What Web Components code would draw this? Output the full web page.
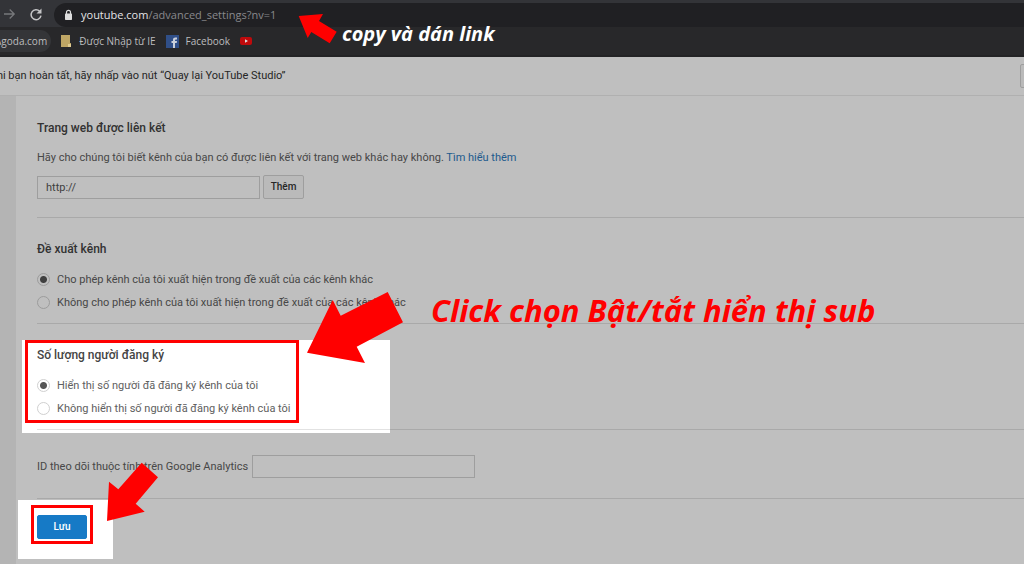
<!DOCTYPE html>
<html lang="vi">
<head>
<meta charset="utf-8">
<title>Cài đặt nâng cao</title>
<style>
html,body{height:100%}
body{margin:0;overflow:hidden;background:#fff}
</style>
</head>
<body>
<guide-page></guide-page>
<script>
const define = (name, html, setup) => customElements.define(name, class extends HTMLElement {
  constructor() {
    super();
    this.attachShadow({ mode: 'open' }).innerHTML = html;
  }
  connectedCallback() {
    if (setup) setup(this, this.shadowRoot);
  }
});

define('browser-bar', `
<style>
:host{display:block;background:#28282a;font:10px/16px "Open Sans","Noto Sans",sans-serif;color:#bdbdbf;overflow:hidden;border-bottom:2px solid #232325;height:55px}
.nav{display:flex;align-items:center;height:27px;background:#333438}
button{border:0;padding:0;background:none;width:16px;height:16px;flex:none;display:block}
.nav button+button{margin-left:10px}
.pill{flex:1;display:flex;align-items:center;height:24px;margin:2px 0 0 12px;border-radius:12px 0 0 12px;background:#202023;padding-left:9px;gap:7px}
.url{font-size:11px;color:#88898c;display:block}
.url b{font-weight:400;color:#e4e4e6}
.marks{display:flex;align-items:center;height:28px}
a{color:inherit;text-decoration:none;display:flex;align-items:center;gap:7px;white-space:nowrap}
.marks a+a+a{margin-left:10px}
.chip{background:#343538;border-radius:0 11px 11px 0;height:22px;padding-right:4px;margin:0 9px 0 -5px}
svg{display:block;flex:none}
</style>
<nav class="nav" aria-label="Điều hướng">
<button aria-label="Tiếp"><svg width="16" height="16" viewBox="0 0 16 16" fill="none" stroke="#77787b" stroke-width="1.3"><path d="M4 8H14M9.7 3.5 14.2 8 9.7 12.500"/></svg></button>
<button aria-label="Tải lại"><svg width="20" height="16" viewBox="0 0 20 16"><path d="M13.700 5.200A5 5 0 1 0 15 9.700" fill="none" stroke="#c5c5c7" stroke-width="1.500"/><path d="M15.500 2.500V7.500H10.500Z" fill="#c5c5c7"/></svg></button>
<div class="pill"><svg width="11" height="12" viewBox="0 0 11 12"><path d="M3.500 5V3.300a2 2 0 0 1 4 0V5" fill="none" stroke="#ddd" stroke-width="1.200"/><rect x="2" y="4.500" width="7" height="6.500" rx=".7" fill="#ddd"/></svg><span class="url"><b>youtube.com</b>/advanced_settings?nv=1</span></div>
</nav>
<nav class="marks" aria-label="Dấu trang">
<a class="chip" href="#">Agoda.com</a>
<a href="#"><svg width="12" height="12" viewBox="0 0 12 12"><path d="M1 0h9v8h1v4H1Z" fill="#bfa665"/><path d="M8 9h3v3H8Z" fill="#e0cb91"/></svg>Được Nhập từ IE</a>
<a href="#"><svg width="13" height="13" viewBox="0 0 13 13"><path d="M0 0h13v13H0Z" fill="#304f88"/><path d="M7 13V8H5.500V6H7V4.600Q7 2.500 9.200 2.500H11V4.400H9.800Q9 4.400 9 5.200V6h2L10.700 8H9v5Z" fill="#cbd0da"/></svg>Facebook</a>
<a href="#" aria-label="YouTube"><svg width="12" height="10" viewBox="0 0 12 10"><rect y="1" width="12" height="8" rx="2" fill="#bf0a0c"/><path d="M5 3.200 8 5 5 6.800Z" fill="#ddd"/></svg></a>
</nav>`);

define('notice-bar', `
<style>
:host{display:flex;align-items:center;height:38px;border-bottom:1px solid #ebebeb;font-size:11px;line-height:16px;color:#333;overflow:hidden}
p{margin:0 auto 0 -10px;white-space:nowrap}
button{width:60px;height:24px;box-sizing:border-box;border:1px solid #d3d3d3;border-radius:2px;background:#f8f8f8;margin-right:-56px;flex:none}
</style>
<p><slot></slot></p><button aria-label="Quay lại YouTube Studio"></button>`);

define('settings-section', `
<style>
:host{display:block;border-bottom:1px solid #e2e2e2;padding:23px 0 9px}
h2{margin:0 0 11px;font-size:12px;line-height:16px;font-weight:500;color:#444}
</style>
<h2><slot name="title"></slot></h2><slot></slot>`);

define('radio-option', `
<style>
:host{display:block;height:23px}
label{display:flex;align-items:center;gap:7px;height:23px;white-space:nowrap}
input{appearance:none;box-sizing:border-box;width:13px;height:13px;margin:0;border:1px solid #d0d0d0;border-radius:50%;background:#fff;flex:none}
input:checked{background:radial-gradient(circle,#555 0 3px,#fff 4px)}
</style>
<label><input type="radio"><span><slot></slot></span></label>`, (el, root) => {
  const input = root.querySelector('input');
  input.checked = el.hasAttribute('checked');
  input.addEventListener('change', () => {
    for (const other of el.parentElement.querySelectorAll('radio-option'))
      if (other !== el) other.shadowRoot.querySelector('input').checked = false;
  });
});

define('settings-form', `
<style>
:host{display:block;flex:1;border-left:16px solid #f0f0f0;padding-left:21px;font-size:11px;line-height:16px;color:#606060}
p{margin:0 0 9px;padding-top:3px}
a{color:#2b79bd;text-decoration:none}
.row{display:flex;align-items:center;gap:3px}
input{box-sizing:border-box;width:223px;height:23px;border:1px solid #d3d3d3;padding:0 8px;font:inherit;color:#555;background:#fff}
button{box-sizing:border-box;font:500 10px/16px Roboto,sans-serif;border-radius:2px}
.add{width:41px;height:24px;padding:0;border:1px solid #d3d3d3;background:#f8f8f8;color:#333}
.save{display:block;width:50px;height:24px;margin-top:16px;padding:0;border:1px solid #167ac6;background:#167ac6;color:#fff}
.links{padding:24px 0 18px}
.ga{display:flex;align-items:center;gap:4px;border-bottom:1px solid #e2e2e2;padding:25px 0 20px}
</style>
<settings-section class="links"><span slot="title">Trang web được liên kết</span>
<p>Hãy cho chúng tôi biết kênh của bạn có được liên kết với trang web khác hay không. <a href="#">Tìm hiểu thêm</a></p>
<div class="row"><input type="text" value="http://" aria-label="Trang web"><button class="add">Thêm</button></div>
</settings-section>
<settings-section><span slot="title">Đề xuất kênh</span>
<radio-option checked>Cho phép kênh của tôi xuất hiện trong đề xuất của các kênh khác</radio-option>
<radio-option>Không cho phép kênh của tôi xuất hiện trong đề xuất của các kênh khác</radio-option>
</settings-section>
<settings-section><span slot="title">Số lượng người đăng ký</span>
<radio-option checked>Hiển thị số người đã đăng ký kênh của tôi</radio-option>
<radio-option>Không hiển thị số người đã đăng ký kênh của tôi</radio-option>
</settings-section>
<div class="ga"><label for="ga">ID theo dõi thuộc tính trên Google Analytics</label><input id="ga" type="text"></div>
<button class="save">Lưu</button>`);

define('spot-light', `
<style>
:host{position:absolute;inset:57px 0 0;pointer-events:none}
svg{display:block;width:100%;height:100%}
</style>
<svg><mask id="m"><rect width="100%" height="100%" fill="#fff"/><rect x="22" y="283" width="368" height="93"/><rect x="18" y="443" width="95" height="59"/></mask><rect width="100%" height="100%" fill-opacity=".25" mask="url(#m)"/></svg>`);

define('guide-marks', `
<style>
:host{position:absolute;inset:0;overflow:hidden;pointer-events:none;font:italic 700 20px/24px "Open Sans","Noto Sans",sans-serif;color:#fff}
svg{position:absolute;inset:0;width:100%;height:100%}
span{position:absolute;white-space:nowrap}
.copy{left:342px;top:22px}
.click{left:431px;top:290px;font-size:31px;line-height:40px;color:#f00}
</style>
<svg fill="none" stroke="#f00" stroke-width="3"><rect x="26.500" y="341.500" width="271" height="80"/><rect x="32.500" y="506.500" width="59" height="36"/>
<g fill="#f00" stroke="none"><path d="M298.700 16 323 14 319 21 336.700 31.700 329.700 43.300 311.300 32 307.700 38Z"/><path d="M307 352.700 332.700 300 340.700 315.700 387.700 292 403 322.300 356.700 346.700 365 363Z"/><path d="M107 521 109 481.700 118.300 489.300 141.700 462.700 158 477.300 135.700 503.700 144.700 511.700Z"/></g></svg>
<span class="copy">copy và dán link</span><span class="click">Click chọn Bật/tắt hiển thị sub</span>`);

define('guide-page', `
<style>
:host{display:flex;flex-direction:column;position:relative;min-height:100%;background:#fff;font-family:Roboto,sans-serif}
</style>
<browser-bar></browser-bar>
<notice-bar>Khi bạn hoàn tất, hãy nhấp vào nút “Quay lại YouTube Studio”</notice-bar>
<settings-form></settings-form>
<spot-light></spot-light>
<guide-marks></guide-marks>`);
</script>
</body>
</html>
